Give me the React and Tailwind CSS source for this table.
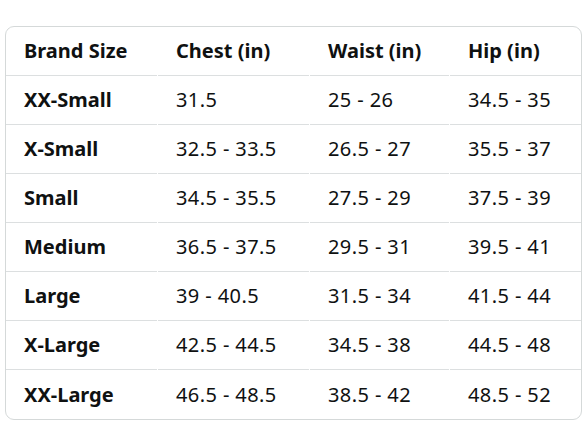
import React from "react";

const header = ["Brand Size", "Chest (in)", "Waist (in)", "Hip (in)"];

const rows = [
  ["XX-Small", "31.5", "25 - 26", "34.5 - 35"],
  ["X-Small", "32.5 - 33.5", "26.5 - 27", "35.5 - 37"],
  ["Small", "34.5 - 35.5", "27.5 - 29", "37.5 - 39"],
  ["Medium", "36.5 - 37.5", "29.5 - 31", "39.5 - 41"],
  ["Large", "39 - 40.5", "31.5 - 34", "41.5 - 44"],
  ["X-Large", "42.5 - 44.5", "34.5 - 38", "44.5 - 48"],
  ["XX-Large", "46.5 - 48.5", "38.5 - 42", "48.5 - 52"],
];

const cols = "grid grid-cols-[151px_151px_139px_131px] gap-x-px";

function Row({ cells, last, bold }) {
  return (
    <div className={cols}>
      {cells.map((c, i) => (
        <div
          key={i}
          className={`h-[49px] flex items-center pl-[18px] ${last ? "h-[48px]" : "border-b border-[#dcdfe0]"} ${
            bold || i === 0 ? "font-bold" : "tracking-[0.4px]"
          }`}
        >
          {c}
        </div>
      ))}
    </div>
  );
}

export default function App() {
  return (
    <div
      className="w-[588px] h-[441px] bg-white pt-[26px] pl-[5px] text-[#0f1111] text-[20px]"
      style={{ fontFamily: '"Noto Sans", Arial, sans-serif' }}
    >
      <div className="w-[577px] border border-[#d5d9d9] rounded-[9px] overflow-hidden">
        <Row cells={header} bold />
        {rows.map((r, i) => (
          <Row key={i} cells={r} last={i === rows.length - 1} />
        ))}
      </div>
    </div>
  );
}
